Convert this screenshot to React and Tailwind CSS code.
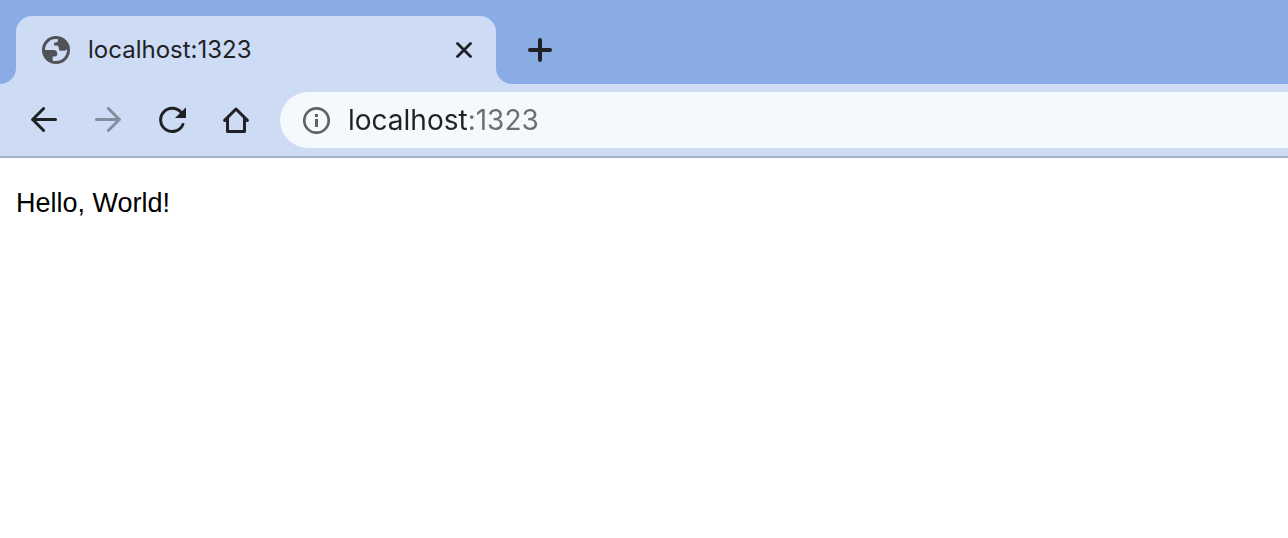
function GlobeIcon() {
  return (
    <svg className="size-7 shrink-0" viewBox="0 0 28 28" aria-hidden="true">
      <circle cx="14" cy="14" r="14" fill="#505257" />
      <path
        d="M3 14A11 11 0 0 1 16 3.2V4.6c0 1.2-.8 1.9-2 1.9h-1.2c-.4 0-.7.3-.7.7v2.4h2.4c1.4 0 2 .9 2.2 2l.3 1.6c.2 1 .9 1.6 1.8 1.6h3.2c1.3 0 1.8-1 3-1.6A11 11 0 0 1 10.6 24.4V20.4h2.4c1.4 0 2.2-.8 2.2-2v-.9c0-2.2-1.3-3.5-3.5-3.5z"
        fill="#cddbf5"
      />
    </svg>
  );
}

function CloseIcon() {
  return (
    <svg className="size-4" viewBox="0 0 16 16" fill="none" stroke="currentColor" strokeWidth="2.8" strokeLinecap="round" aria-hidden="true">
      <path d="M1.5 1.5l13 13M14.5 1.5l-13 13" />
    </svg>
  );
}

function PlusIcon() {
  return (
    <svg className="size-6" viewBox="0 0 24 24" fill="none" stroke="currentColor" strokeWidth="4" strokeLinecap="round" aria-hidden="true">
      <path d="M12 2v20M2 12h20" />
    </svg>
  );
}

function BackIcon() {
  return (
    <svg className="size-8" viewBox="0 0 32 32" fill="none" stroke="currentColor" strokeWidth="3" strokeLinecap="round" strokeLinejoin="round" aria-hidden="true">
      <path d="M15.6 4.5L4.6 15.5L15.6 26.5M4.6 15.5H27.5" />
    </svg>
  );
}

function ForwardIcon() {
  return (
    <svg className="size-8" viewBox="0 0 32 32" fill="none" stroke="currentColor" strokeWidth="3" strokeLinecap="round" strokeLinejoin="round" aria-hidden="true">
      <path d="M16.4 4.5L27.4 15.5L16.4 26.5M27.4 15.5H4.5" />
    </svg>
  );
}

function ReloadIcon() {
  return (
    <svg className="size-8" viewBox="0 0 32 32" aria-hidden="true">
      <path d="M25.1 8.4A11.6 11.6 0 1 0 26.9 20.5" fill="none" stroke="currentColor" strokeWidth="3" strokeLinecap="round" />
      <path d="M30 3.2V14H19z" fill="currentColor" />
    </svg>
  );
}

function HomeIcon() {
  return (
    <svg className="size-8" viewBox="0 0 32 32" fill="none" stroke="currentColor" strokeWidth="3" strokeLinejoin="round" strokeLinecap="round" aria-hidden="true">
      <path d="M4.6 16.4L16 5l11.4 11.4M7.5 14.5v13h17v-13" />
    </svg>
  );
}

function InfoIcon() {
  return (
    <svg className="size-7 shrink-0" viewBox="0 0 28 28" aria-hidden="true">
      <circle cx="14.5" cy="14.5" r="12.2" fill="none" stroke="#5f6368" strokeWidth="2.7" />
      <path d="M13 8h3v3h-3zM13 13h3v8h-3z" fill="#5f6368" />
    </svg>
  );
}

function NavButton({ label, disabled = false, children }) {
  return (
    <button
      type="button"
      aria-label={label}
      disabled={disabled}
      className="flex size-14 items-center justify-center rounded-full text-[#202124] disabled:text-[#838d9f]"
    >
      {children}
    </button>
  );
}

function TabStrip() {
  return (
    <div className="flex items-end bg-[#8aace5] pt-4">
      <div className="size-4 shrink-0 bg-[#cddbf5]">
        <div className="size-full rounded-br-2xl bg-[#8aace5]" />
      </div>
      <div className="flex h-[68px] w-full max-w-[480px] items-center rounded-t-2xl bg-[#cddbf5] pr-4 pl-[26px]">
        <GlobeIcon />
        <span className="ml-[18px] flex-1 truncate text-2xl text-[#202124]">localhost:1323</span>
        <button type="button" aria-label="Close tab" className="flex size-8 items-center justify-center text-[#202124]">
          <CloseIcon />
        </button>
      </div>
      <div className="size-4 shrink-0 bg-[#cddbf5]">
        <div className="size-full rounded-bl-2xl bg-[#8aace5]" />
      </div>
      <button type="button" aria-label="New tab" className="flex h-[68px] w-14 shrink-0 items-center justify-center text-[#202124]">
        <PlusIcon />
      </button>
    </div>
  );
}

function Toolbar() {
  return (
    <div className="flex items-center border-b-2 border-[#a6b1c7] bg-[#cddbf5] py-2 pl-4">
      <nav className="flex gap-2" aria-label="Navigation">
        <NavButton label="Back">
          <BackIcon />
        </NavButton>
        <NavButton label="Forward" disabled>
          <ForwardIcon />
        </NavButton>
        <NavButton label="Reload">
          <ReloadIcon />
        </NavButton>
        <NavButton label="Home">
          <HomeIcon />
        </NavButton>
      </nav>
      <div className="ml-4 flex h-14 flex-1 items-center gap-[18px] rounded-l-full bg-[#f5f8fd] pl-[22px]">
        <InfoIcon />
        <input
          type="text"
          aria-label="Address"
          defaultValue="localhost:1323"
          spellCheck={false}
          className="h-10 min-w-0 flex-1 bg-[linear-gradient(90deg,#202124_120px,#6b6e73_120px)] bg-clip-text text-[28px] text-transparent caret-[#202124] outline-none"
        />
      </div>
    </div>
  );
}

export default function App() {
  return (
    <div className="min-h-screen bg-white font-[Inter,sans-serif]">
      <header>
        <TabStrip />
        <Toolbar />
      </header>
      <main className="px-4 py-7">
        <p className="font-['Liberation_Sans',Arial,sans-serif] text-[27px] leading-[34px] text-black">Hello, World!</p>
      </main>
    </div>
  );
}
